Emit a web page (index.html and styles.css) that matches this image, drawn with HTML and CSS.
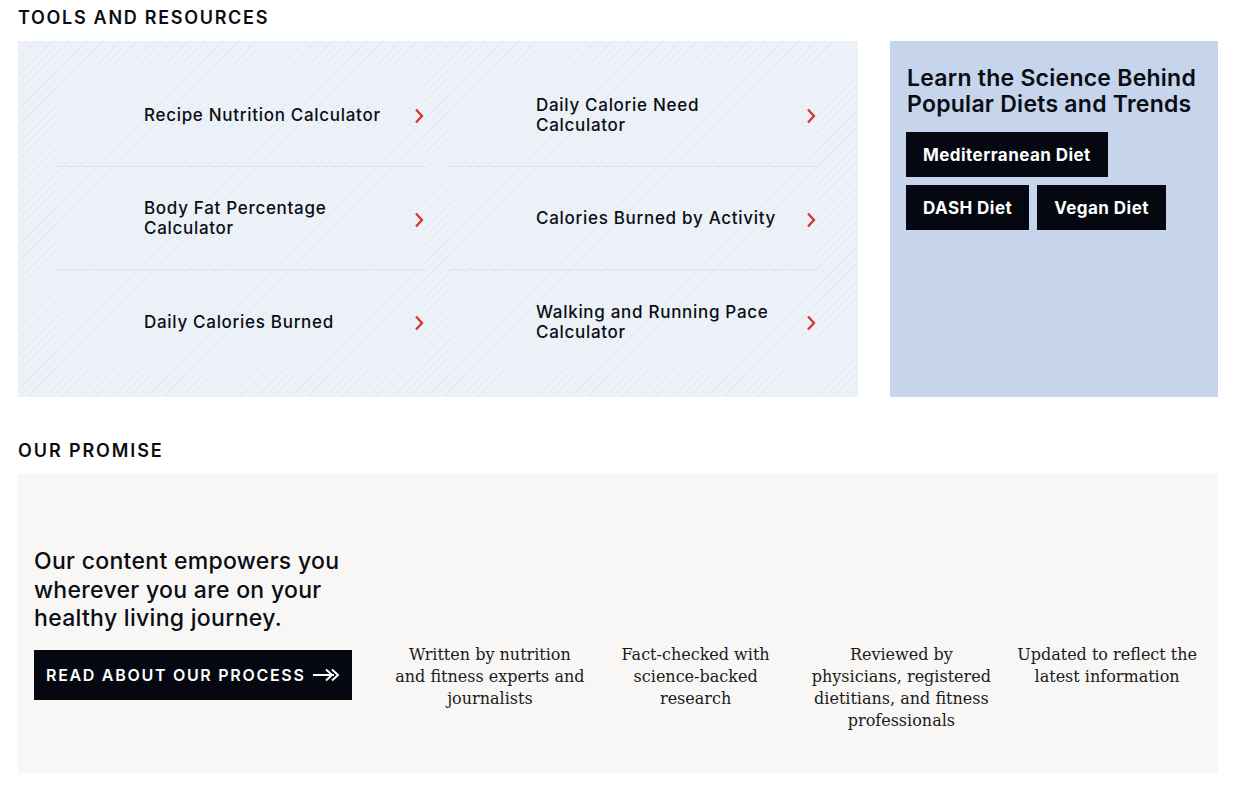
FILE: index.html
```html
<!DOCTYPE html>
<html lang="en">
<head>
<meta charset="utf-8">
<title>Tools and Resources</title>
<link rel="stylesheet" href="styles.css">
</head>
<body>
<main class="page">
  <h2 class="section-title">TOOLS AND RESOURCES</h2>
  <section class="tools">
    <div class="tools-grid">
      <a class="tool" href="#"><span class="tool-img"></span><span class="tool-name">Recipe Nutrition Calculator</span><svg class="chev" viewBox="0 0 10 16" width="10" height="16"><polyline points="2,1.5 8,8 2,14.5"/></svg></a>
      <a class="tool" href="#"><span class="tool-img"></span><span class="tool-name">Daily Calorie Need Calculator</span><svg class="chev" viewBox="0 0 10 16" width="10" height="16"><polyline points="2,1.5 8,8 2,14.5"/></svg></a>
      <a class="tool" href="#"><span class="tool-img"></span><span class="tool-name">Body Fat Percentage Calculator</span><svg class="chev" viewBox="0 0 10 16" width="10" height="16"><polyline points="2,1.5 8,8 2,14.5"/></svg></a>
      <a class="tool" href="#"><span class="tool-img"></span><span class="tool-name">Calories Burned by Activity</span><svg class="chev" viewBox="0 0 10 16" width="10" height="16"><polyline points="2,1.5 8,8 2,14.5"/></svg></a>
      <a class="tool last" href="#"><span class="tool-img"></span><span class="tool-name">Daily Calories Burned</span><svg class="chev" viewBox="0 0 10 16" width="10" height="16"><polyline points="2,1.5 8,8 2,14.5"/></svg></a>
      <a class="tool last" href="#"><span class="tool-img"></span><span class="tool-name">Walking and Running Pace Calculator</span><svg class="chev" viewBox="0 0 10 16" width="10" height="16"><polyline points="2,1.5 8,8 2,14.5"/></svg></a>
    </div>
    <aside class="diets">
      <h3 class="diets-title">Learn the Science Behind Popular Diets and Trends</h3>
      <div class="diet-buttons">
        <a class="diet-btn" href="#">Mediterranean Diet</a>
        <a class="diet-btn" href="#">DASH Diet</a>
        <a class="diet-btn" href="#">Vegan Diet</a>
      </div>
    </aside>
  </section>

  <h2 class="section-title promise-title">OUR PROMISE</h2>
  <section class="promise">
    <div class="promise-intro">
      <p class="promise-lead">Our content empowers you wherever you are on your healthy living journey.</p>
      <a class="process-btn" href="#">READ ABOUT OUR PROCESS
        <svg class="arrow" viewBox="0 0 28 14" width="28" height="14"><line x1="1" y1="7" x2="22" y2="7"/><polyline points="14,1.5 20,7 14,12.5"/><polyline points="20,1.5 26,7 20,12.5"/></svg>
      </a>
    </div>
    <div class="promise-cols">
      <div class="promise-col"><div class="promise-img"></div><p>Written by nutrition and fitness experts and journalists</p></div>
      <div class="promise-col"><div class="promise-img"></div><p>Fact-checked with science-backed research</p></div>
      <div class="promise-col"><div class="promise-img"></div><p>Reviewed by physicians, registered dietitians, and fitness professionals</p></div>
      <div class="promise-col"><div class="promise-img"></div><p>Updated to reflect the latest information</p></div>
    </div>
  </section>
</main>
</body>
</html>
```

FILE: styles.css
```css
* { box-sizing: border-box; }

body {
  margin: 0;
  background: #ffffff;
  color: #0b0d14;
  font-family: "Inter", "Noto Sans", "DejaVu Sans", sans-serif;
}

.page {
  width: 1200px;
  margin-left: 18px;
}

.section-title {
  margin: 6px 0 11px;
  font-size: 18px;
  line-height: 24px;
  font-weight: 600;
  letter-spacing: 1.7px;
  color: #0b0d14;
}

.promise-title {
  margin-top: 42px;
  letter-spacing: 1.9px;
}

.tools {
  display: flex;
  gap: 32px;
  height: 356px;
}

.tools-grid {
  width: 840px;
  padding: 22px 40px 24px 39px;
  display: grid;
  grid-template-columns: 369px 369px;
  grid-template-rows: 104px 103px 103px;
  column-gap: 23px;
  background-color: #edf1f8;
  background-image: repeating-linear-gradient(135deg, rgba(212, 220, 233, 0.36) 0 1px, rgba(255, 255, 255, 0) 1px 6px);
}

.tool {
  display: flex;
  align-items: center;
  text-decoration: none;
  color: #0b0d14;
  border-bottom: 1px dotted #d3d8df;
  background: rgba(238, 242, 249, 0.35);
}

.tool.last {
  border-bottom: none;
}

.tool-img {
  width: 87px;
  flex: none;
  align-self: stretch;
}

.tool-name {
  width: 248px;
  flex: none;
  font-size: 17px;
  line-height: 20px;
  font-weight: 500;
  letter-spacing: 0.7px;
}

.chev {
  margin-left: auto;
  margin-right: 2px;
  margin-top: 3px;
  flex: none;
}

.chev polyline {
  fill: none;
  stroke: #d6372c;
  stroke-width: 2.3;
}

.diets {
  width: 328px;
  padding: 24px 16px 0 16px;
  background: #c6d4ec;
}

.diets-title {
  margin: 0 0 15px 1px;
  font-size: 23px;
  line-height: 26px;
  font-weight: 600;
  letter-spacing: 0.25px;
  color: #0b0d14;
}

.diet-buttons {
  display: flex;
  flex-wrap: wrap;
  gap: 8px;
}

.diet-btn {
  display: flex;
  align-items: center;
  height: 45px;
  padding: 0 17px;
  background: #050810;
  color: #ffffff;
  font-size: 17px;
  font-weight: 700;
  letter-spacing: 0.45px;
  text-decoration: none;
}

.promise {
  display: flex;
  align-items: center;
  gap: 35px;
  height: 299px;
  padding: 0 8px 0 16px;
  background: #f8f7f5;
}

.promise-intro {
  width: 318px;
  flex: none;
}

.promise-lead {
  margin: 0 0 17px;
  font-size: 23px;
  line-height: 28.5px;
  font-weight: 500;
  letter-spacing: 0.3px;
  color: #0b0d14;
}

.process-btn {
  display: flex;
  align-items: center;
  justify-content: space-between;
  height: 50px;
  padding: 0 12px;
  background: #050810;
  color: #ffffff;
  font-size: 16px;
  font-weight: 600;
  letter-spacing: 1.7px;
  text-decoration: none;
}

.arrow line,
.arrow polyline {
  fill: none;
  stroke: #ffffff;
  stroke-width: 2;
}

.promise-cols {
  flex: 1;
  display: grid;
  grid-template-columns: repeat(4, 1fr);
}

.promise-col {
  padding: 0 8px;
  text-align: center;
}

.promise-img {
  height: 128px;
}

.promise-col p {
  margin: 0;
  font-family: "DejaVu Serif", "Liberation Serif", serif;
  font-size: 16px;
  line-height: 22px;
  color: #1a1a1c;
}
```
